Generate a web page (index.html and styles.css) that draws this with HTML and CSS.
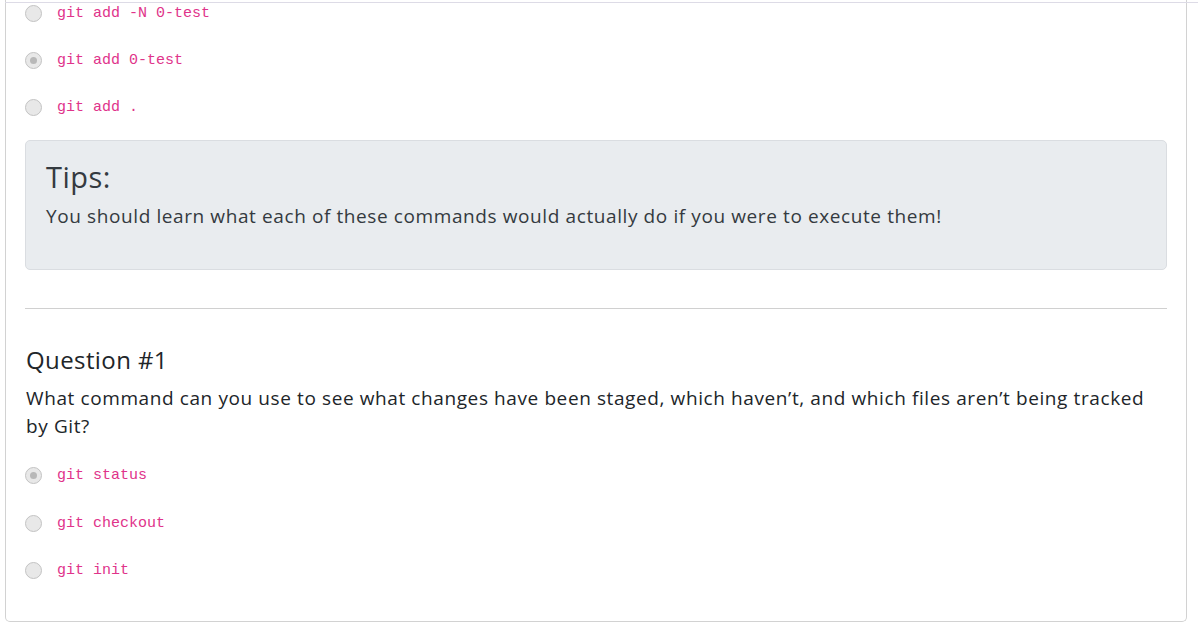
FILE: index.html
```html
<!DOCTYPE html>
<html lang="en">
<head>
<meta charset="utf-8">
<title>Quiz</title>
<link rel="stylesheet" href="styles.css">
</head>
<body>
<div class="topline"></div>
<div class="page">
  <div class="card">
    <ul class="options first">
      <li class="option"><span class="radio"></span><code>git add -N 0-test</code></li>
      <li class="option"><span class="radio checked"></span><code>git add 0-test</code></li>
      <li class="option"><span class="radio"></span><code>git add .</code></li>
    </ul>
    <div class="tips">
      <h3 class="tips-title">Tips:</h3>
      <p class="tips-text">You should learn what each of these commands would actually do if you were to execute them!</p>
    </div>
    <hr class="divider">
    <h4 class="q-title">Question #1</h4>
    <p class="q-text">What command can you use to see what changes have been staged, which haven’t, and which files aren’t being tracked by Git?</p>
    <ul class="options second">
      <li class="option"><span class="radio checked"></span><code>git status</code></li>
      <li class="option"><span class="radio"></span><code>git checkout</code></li>
      <li class="option"><span class="radio"></span><code>git init</code></li>
    </ul>
  </div>
</div>
</body>
</html>
```
FILE: styles.css
```css
html, body {
  margin: 0;
  padding: 0;
  background: #ffffff;
}
body {
  font-family: "Open Sans", "Noto Sans", sans-serif;
  color: #212529;
}
.topline {
  position: fixed;
  top: 2px;
  left: 5px;
  right: 0;
  height: 1px;
  background: #dddbe6;
}
.page {
  padding: 0 11px 16px 5px;
}
.card {
  border: 1px solid #d2d2d2;
  border-top: none;
  border-radius: 0 0 5px 5px;
  padding: 0 19px 38px 19px;
}
.options {
  list-style: none;
  margin: 0;
  padding: 0;
  display: flex;
  flex-direction: column;
  gap: 23px;
}
.options.first {
  padding-top: 1px;
}
.options.second {
  gap: 23.5px;
}
.option {
  display: flex;
  align-items: center;
  height: 24px;
  gap: 15px;
}
.radio {
  box-sizing: border-box;
  width: 17px;
  height: 17px;
  border-radius: 50%;
  border: 1.5px solid #c3c3c3;
  background: #e8e8e8;
  display: flex;
  align-items: center;
  justify-content: center;
  flex: none;
}
.radio.checked::after {
  content: "";
  width: 7px;
  height: 7px;
  border-radius: 50%;
  background: #b8b8b8;
}
code {
  font-family: "Liberation Mono", "DejaVu Sans Mono", monospace;
  font-size: 15px;
  color: #e0338a;
}
.tips {
  margin-top: 21px;
  background: #e9ecef;
  border: 1px solid #dadde1;
  border-radius: 5px;
  padding: 19px 20px 22px 20px;
}
.tips-title {
  margin: 0 0 8px 0;
  font-size: 29px;
  font-weight: 500;
  line-height: 1.2;
  letter-spacing: 0.5px;
  color: #343a40;
}
.tips-text {
  margin: 0 0 17px 0;
  font-size: 19px;
  line-height: 27px;
  letter-spacing: 0.6px;
  color: #343a40;
}
.divider {
  margin: 38px 0 0 0;
  border: none;
  border-top: 1px solid #d0d0d0;
  height: 0;
}
.q-title {
  margin: 37px 0 9px 1px;
  font-size: 24px;
  font-weight: 500;
  line-height: 1.2;
  letter-spacing: 0.4px;
  color: #212529;
}
.q-text {
  margin: 0 0 24px 1px;
  font-size: 19px;
  line-height: 28px;
  letter-spacing: 0.6px;
  color: #212529;
}
```
